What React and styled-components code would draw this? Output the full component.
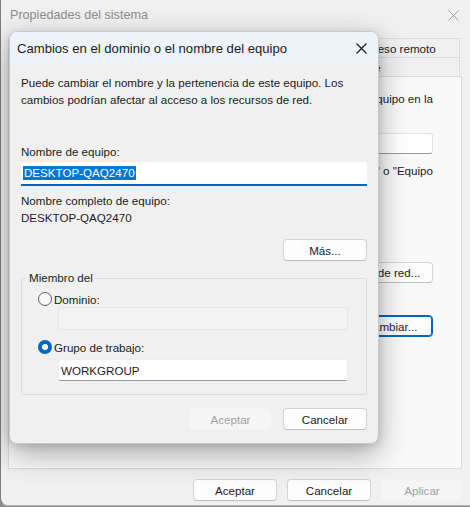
import React from "react";
import styled, { createGlobalStyle } from "styled-components";

const Global = createGlobalStyle`
  html, body { margin: 0; padding: 0; }
  body {
    width: 470px; height: 507px; overflow: hidden;
    background: #8f8f8f;
    font-family: "Liberation Sans", Arial, sans-serif;
    font-size: 11.6px; color: #1b1b1b;
  }
  * { box-sizing: border-box; }
`;

const Stage = styled.div`
  position: relative;
  width: 470px;
  height: 507px;
`;

/* ---------- background window ---------- */
const Window = styled.div`
  width: 486px;
  height: 506px;
  background: #f0f0f0;
  border-left: 1px solid #7d7d7d;
  border-bottom: 1px solid #b5b5b5;
  border-bottom-left-radius: 8px;
  display: flex;
  flex-direction: column;
`;

const WinTitleBar = styled.div`
  height: 30px;
  display: flex;
  align-items: center;
  justify-content: space-between;
  padding: 0 0 0 9px;
  width: 469px;
`;

const WinTitle = styled.span`
  font-size: 12.6px;
  color: #8d8d8d;
`;

const WinBody = styled.div`
  padding: 8px 0 0 7px;
  width: 461px;
  display: flex;
  flex-direction: column;
`;

const TabRow = styled.div`
  display: flex;
  height: 19px;
  width: 452px;
`;

const Tab = styled.div`
  flex: 0 0 ${(p) => p.w}px;
  border: 1px solid #dcdcdc;
  border-left-width: ${(p) => (p.first ? 1 : 0)}px;
  border-bottom-width: 0;
  background: ${(p) => (p.active ? "#f9f9f9" : "#f0f0f0")};
  display: flex;
  align-items: center;
  justify-content: center;
  white-space: nowrap;
  color: #1b1b1b;
`;

const Pane = styled.div`
  width: 454px;
  height: 393px;
  border: 1px solid #dadada;
  background: #f9f9f9;
  padding: 14px 28px 0 12px;
  overflow: hidden;
  display: flex;
  flex-direction: column;
`;

const PaneLine = styled.div`
  height: 16px;
  line-height: 16px;
  white-space: nowrap;
  text-align: right;
  margin-top: ${(p) => p.mt || 0}px;
  overflow: hidden;
`;

const PaneRow = styled.div`
  display: flex;
  align-items: center;
  justify-content: flex-end;
  margin-top: ${(p) => p.mt || 0}px;
`;

const PaneInput = styled.div`
  width: 250px;
  height: 21px;
  background: #ffffff;
  border: 1px solid #e3e3e3;
  border-bottom-color: #9a9a9a;
  border-radius: 3px;
`;

const Footer = styled.div`
  display: flex;
  justify-content: flex-end;
  gap: 10px;
  width: 455px;
  margin-top: 10px;
`;

const Button = styled.button`
  width: ${(p) => p.w || 84}px;
  height: ${(p) => p.h || 22}px;
  font-family: inherit;
  font-size: 11.6px;
  padding: 0;
  border-radius: 4px;
  background: ${(p) => (p.disabled ? "#f5f5f5" : "#fdfdfd")};
  color: ${(p) => (p.disabled ? "#a2a2a2" : "#1b1b1b")};
  border: 1px solid
    ${(p) => (p.primary ? "#0067c0" : p.disabled ? "#f2f2f2" : "#d3d3d3")};
  border-bottom-color: ${(p) =>
    p.primary ? "#0067c0" : p.disabled ? "#f2f2f2" : "#bdbdbd"};
  box-shadow: ${(p) => (p.primary ? "inset 0 0 0 1px #0067c0" : "none")};
  flex: 0 0 auto;
`;

/* ---------- foreground dialog ---------- */
const Dialog = styled.div`
  position: absolute;
  left: 9px;
  top: 31px;
  width: 370px;
  height: 413px;
  border: 1px solid #c9c9c9;
  border-radius: 8px;
  overflow: hidden;
  background: #f0f0f0;
  box-shadow: 0 10px 30px rgba(0, 0, 0, 0.32), 0 2px 8px rgba(0, 0, 0, 0.12);
  display: flex;
  flex-direction: column;
`;

const DlgTitleBar = styled.div`
  height: 31px;
  flex: 0 0 31px;
  background: #eef2f9;
  display: flex;
  align-items: center;
  justify-content: space-between;
  padding: 1px 11px 0 7px;
`;

const DlgTitle = styled.span`
  font-size: 13.1px;
  color: #1b1b1b;
`;

const DlgBody = styled.div`
  flex: 1;
  padding: 11px 11px 0 11px;
  display: flex;
  flex-direction: column;
`;

const Para = styled.p`
  margin: 0;
  line-height: 17px;
  width: 340px;
`;

const Label = styled.div`
  line-height: 16px;
  height: 16px;
  margin-top: ${(p) => p.mt || 0}px;
`;

const NameInput = styled.div`
  margin-top: 2px;
  height: 24px;
  width: 346px;
  background: #ffffff;
  border-bottom: 2px solid #0067c0;
  border-radius: 3px 3px 0 0;
  display: flex;
  align-items: center;
  padding-left: 2px;
`;

const Selected = styled.span`
  background: #0078d7;
  color: #ffffff;
  line-height: 14px;
  padding: 0 1px;
`;

const RightRow = styled.div`
  display: flex;
  justify-content: flex-end;
  gap: 11px;
  width: 346px;
  margin-top: ${(p) => p.mt || 0}px;
`;

const Group = styled.fieldset`
  margin: 9px 0 0 0;
  padding: 0 0 13px 0;
  width: 346px;
  border: 1px solid #dcdcdc;
  border-radius: 2px;
  display: flex;
  flex-direction: column;
`;

const Legend = styled.legend`
  padding: 0 2px;
  margin-left: 5px;
  line-height: 16px;
`;

const RadioRow = styled.label`
  display: flex;
  align-items: center;
  gap: 2px;
  height: 16px;
  margin: ${(p) => p.mt || 0}px 0 0 16px;
`;

const RadioCircle = styled.span`
  width: 14px;
  height: 14px;
  border-radius: 50%;
  flex: 0 0 14px;
  border: ${(p) => (p.checked ? "4px solid #0067c0" : "1px solid #5c5c5c")};
  background: ${(p) => (p.checked ? "#ffffff" : "#f7f7f7")};
`;

const FieldInput = styled.div`
  margin: ${(p) => p.mt || 0}px 0 0 36px;
  width: 290px;
  height: ${(p) => p.h || 23}px;
  border-radius: 3px;
  background: ${(p) => (p.disabled ? "#f3f3f3" : "#ffffff")};
  border: 1px solid ${(p) => (p.disabled ? "#e4e4e4" : "#ececec")};
  border-bottom-color: ${(p) => (p.disabled ? "#e4e4e4" : "#9c9c9c")};
  display: flex;
  align-items: center;
  padding-left: 2px;
`;

const CloseIcon = ({ size, color, width }) => (
  <svg width={size} height={size} viewBox={`0 0 ${size} ${size}`}>
    <path
      d={`M0.5 0.5 L${size - 0.5} ${size - 0.5} M${size - 0.5} 0.5 L0.5 ${size - 0.5}`}
      stroke={color}
      strokeWidth={width}
      fill="none"
    />
  </svg>
);

const CloseSlot = styled.span`
  display: flex;
  align-items: center;
  margin-right: ${(p) => p.mr || 0}px;
`;

export default function App() {
  return (
    <Stage>
      <Global />
      <Window>
        <WinTitleBar>
          <WinTitle>Propiedades del sistema</WinTitle>
          <CloseSlot mr={11}>
            <CloseIcon size={11} color="#9a9a9a" width={1} />
          </CloseSlot>
        </WinTitleBar>
        <WinBody>
          <TabRow>
            <Tab w={150} first />
            <Tab w={177} />
            <Tab w={125}>Acceso remoto</Tab>
          </TabRow>
          <TabRow>
            <Tab w={244} first active />
            <Tab w={208}>Hardware</Tab>
          </TabRow>
          <Pane>
            <PaneLine>su equipo en la</PaneLine>
            <PaneRow mt={26}>
              <PaneInput />
            </PaneRow>
            <PaneLine mt={9}>cocina" o "Equipo</PaneLine>
            <PaneRow mt={83}>
              <Button h={21}>Id. de red...</Button>
            </PaneRow>
            <PaneRow mt={32}>
              <Button primary>Cambiar...</Button>
            </PaneRow>
          </Pane>
          <Footer>
            <Button>Aceptar</Button>
            <Button>Cancelar</Button>
            <Button disabled w={82}>Aplicar</Button>
          </Footer>
        </WinBody>
      </Window>

      <Dialog>
        <DlgTitleBar>
          <DlgTitle>Cambios en el dominio o el nombre del equipo</DlgTitle>
          <CloseSlot>
            <CloseIcon size={11} color="#1b1b1b" width={1.2} />
          </CloseSlot>
        </DlgTitleBar>
        <DlgBody>
          <Para>
            Puede cambiar el nombre y la pertenencia de este equipo. Los
            cambios podrían afectar al acceso a los recursos de red.
          </Para>
          <Label mt={36}>Nombre de equipo:</Label>
          <NameInput>
            <Selected>DESKTOP-QAQ2470</Selected>
          </NameInput>
          <Label mt={7}>Nombre completo de equipo:</Label>
          <Label mt={1}>DESKTOP-QAQ2470</Label>
          <RightRow mt={13}>
            <Button>Más...</Button>
          </RightRow>
          <Group>
            <Legend>Miembro del</Legend>
            <RadioRow mt={5}>
              <RadioCircle />
              Dominio:
            </RadioRow>
            <FieldInput disabled />
            <RadioRow mt={9}>
              <RadioCircle checked />
              Grupo de trabajo:
            </RadioRow>
            <FieldInput mt={4} h={22}>WORKGROUP</FieldInput>
          </Group>
          <RightRow mt={13}>
            <Button disabled w={83}>Aceptar</Button>
            <Button>Cancelar</Button>
          </RightRow>
        </DlgBody>
      </Dialog>
    </Stage>
  );
}
